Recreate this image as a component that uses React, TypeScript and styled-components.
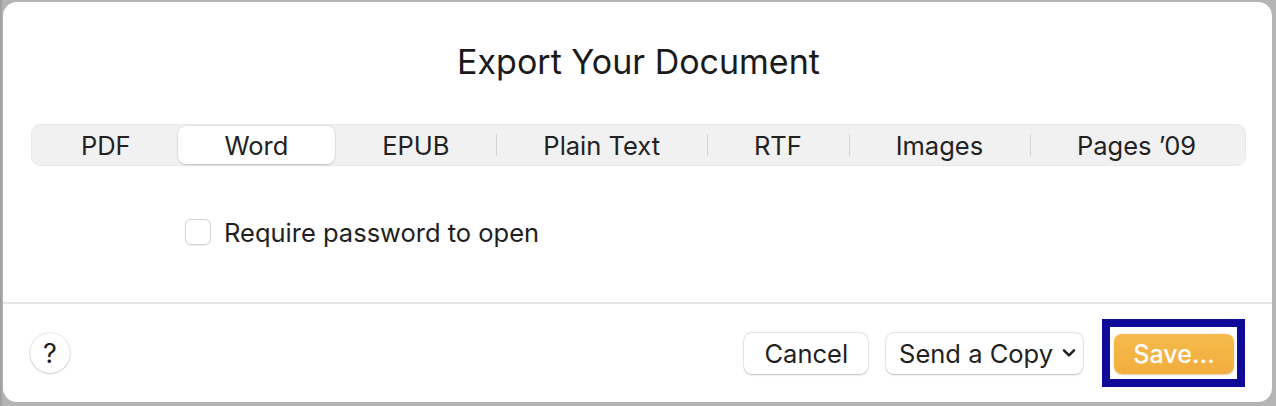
import React, { useState } from 'react';
import styled, { createGlobalStyle } from 'styled-components';

const GlobalStyle = createGlobalStyle`
  html, body {
    margin: 0;
    padding: 0;
    background: #a9a9a9;
  }
  body {
    font-family: Inter, "Noto Sans", "Liberation Sans", sans-serif;
    color: #222222;
    -webkit-font-smoothing: antialiased;
  }
`;

const Page = styled.div`
  width: 1276px;
  height: 406px;
  padding: 2px 4px 4px 3px;
  box-sizing: border-box;
  background: linear-gradient(90deg, #9a9a9a 0px, #b4b4b4 3px, #b4b4b4 100%);
`;

const Dialog = styled.div`
  width: 1269px;
  height: 400px;
  background: #ffffff;
  border-radius: 14px;
  display: flex;
  flex-direction: column;
  overflow: hidden;
`;

const Body = styled.div`
  height: 300px;
  display: flex;
  flex-direction: column;
  padding: 40px 26px 0 28px;
  box-sizing: border-box;
`;

const Title = styled.h1`
  margin: 0;
  font-size: 34px;
  line-height: 40px;
  font-weight: 400;
  text-align: center;
  color: #1a1a1a;
`;

const Segmented = styled.div`
  margin-top: 42px;
  height: 42px;
  display: flex;
  align-items: center;
  padding: 0 2px;
  background: #f1f1f1;
  border: 1px solid #e9e9e9;
  border-radius: 9px;
  box-sizing: border-box;
`;

const Segment = styled.button<{ $active: boolean; $divider: boolean }>`
  flex: 1 1 auto;
  height: 38px;
  border: none;
  padding: 0;
  font: inherit;
  font-size: 25.5px;
  color: #222222;
  background: ${(p) => (p.$active ? '#ffffff' : 'transparent')};
  border-radius: 8px;
  box-shadow: ${(p) =>
    p.$active ? '0 1px 2px rgba(0,0,0,0.16), 0 0 0 0.5px rgba(0,0,0,0.08)' : 'none'};
  position: relative;
  cursor: default;

  &::before {
    content: '';
    display: ${(p) => (p.$divider ? 'block' : 'none')};
    position: absolute;
    left: 0;
    top: 8px;
    width: 1px;
    height: 22px;
    background: #d3d3d3;
  }
`;

const OptionRow = styled.label`
  margin-top: 51px;
  margin-left: 154px;
  height: 30px;
  display: flex;
  align-items: center;
  gap: 13px;
  font-size: 25.5px;
  color: #1f1f1f;
`;

const CheckBox = styled.span<{ $checked: boolean }>`
  width: 26px;
  height: 26px;
  box-sizing: border-box;
  border-radius: 6px;
  border: 1px solid #d2d2d2;
  background: ${(p) => (p.$checked ? '#f2ad3a' : '#ffffff')};
  box-shadow: 0 0.5px 1px rgba(0, 0, 0, 0.06);
`;

const Divider = styled.div`
  height: 2px;
  background: #e6e6e6;
`;

const Footer = styled.div`
  flex: 1;
  display: flex;
  align-items: center;
  gap: 18px;
  padding: 0 27px 0 27px;
`;

const HelpButton = styled.button`
  width: 40px;
  height: 40px;
  border-radius: 50%;
  border: none;
  background: #ffffff;
  box-shadow: 0 0.5px 2px rgba(0, 0, 0, 0.25), 0 0 0 0.5px rgba(0, 0, 0, 0.1);
  font: inherit;
  font-size: 27px;
  font-weight: 400;
  color: #1f1f1f;
  padding: 0;
  display: flex;
  align-items: center;
  justify-content: center;
  margin-right: auto;
`;

const Button = styled.button<{ $menu?: boolean }>`
  height: 41px;
  padding: ${(p) => (p.$menu ? '0 7px 0 13px' : '0 20px')};
  border: none;
  border-radius: 8px;
  background: #ffffff;
  box-shadow: 0 0.5px 2px rgba(0, 0, 0, 0.22), 0 0 0 0.5px rgba(0, 0, 0, 0.1);
  font: inherit;
  font-size: 25.5px;
  color: #1f1f1f;
  display: flex;
  align-items: center;
  gap: 9px;
`;

const Highlight = styled.div`
  margin-left: 1px;
  border: 8px solid #100a99;
  padding: 7px 3px 5px 4px;
  background: #ffffff;
`;

const PrimaryButton = styled.button`
  width: 120px;
  height: 40px;
  border: none;
  border-radius: 8px;
  background: linear-gradient(180deg, #f6ba4c 0%, #f2ae3e 100%);
  box-shadow: 0 0.5px 1.5px rgba(180, 110, 0, 0.35);
  font: inherit;
  font-size: 25px;
  font-weight: 500;
  color: #ffffff;
`;

const tabs = ['PDF', 'Word', 'EPUB', 'Plain Text', 'RTF', 'Images', 'Pages ’09'];

const Chevron = () => (
  <svg width="14" height="10" viewBox="0 0 14 10" fill="none">
    <path
      d="M2 2.4 L7 7.4 L12 2.4"
      stroke="#1f1f1f"
      strokeWidth="2.5"
      strokeLinecap="round"
      strokeLinejoin="round"
    />
  </svg>
);

export default function App() {
  const [active, setActive] = useState(1);
  const [checked, setChecked] = useState(false);

  return (
    <>
      <GlobalStyle />
      <Page>
        <Dialog>
          <Body>
            <Title>Export Your Document</Title>
            <Segmented>
              {tabs.map((t, i) => (
                <Segment
                  key={t}
                  $active={i === active}
                  $divider={i > 0 && i !== active && i - 1 !== active}
                  onClick={() => setActive(i)}
                >
                  {t}
                </Segment>
              ))}
            </Segmented>
            <OptionRow onClick={() => setChecked(!checked)}>
              <CheckBox $checked={checked} />
              Require password to open
            </OptionRow>
          </Body>
          <Divider />
          <Footer>
            <HelpButton>?</HelpButton>
            <Button>Cancel</Button>
            <Button $menu>
              Send a Copy
              <Chevron />
            </Button>
            <Highlight>
              <PrimaryButton>Save…</PrimaryButton>
            </Highlight>
          </Footer>
        </Dialog>
      </Page>
    </>
  );
}
